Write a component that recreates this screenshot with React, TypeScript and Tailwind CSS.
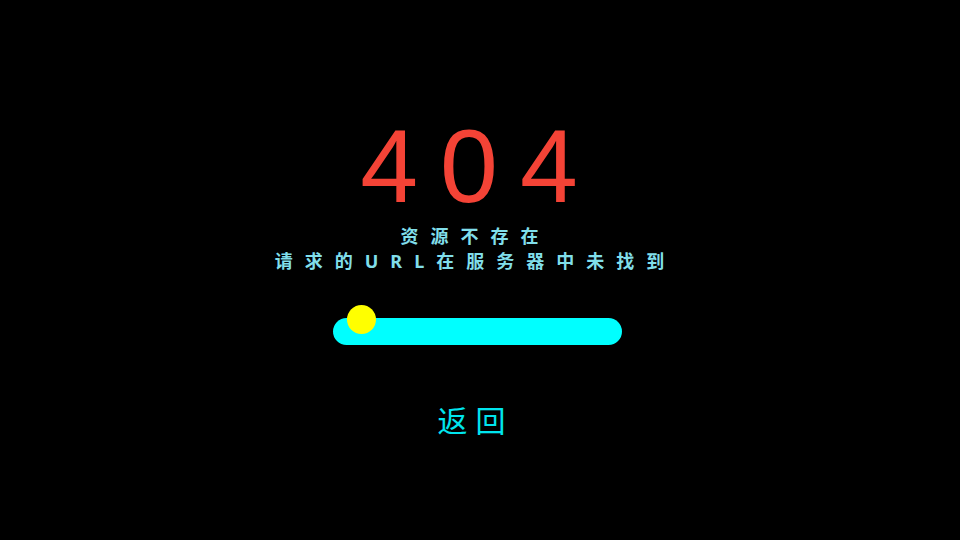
export default function App() {
  return (
    <div className="flex h-screen w-full flex-col items-center bg-black pt-[114px] font-['Liberation_Sans','Noto_Sans_CJK_SC',sans-serif]">
      <h1 className="text-[104px] leading-[104px] tracking-[22px] text-[#f44336]">404</h1>
      <div className="mt-[6px] mr-[9px] flex flex-col items-center font-['Noto_Sans','Noto_Sans_CJK_SC',sans-serif] text-[18px] leading-[25px] font-bold tracking-[12px] text-[#80deea]">
        <p>资源不存在</p>
        <p>请求的URL在服务器中未找到</p>
      </div>
      <div className="relative mt-[44px] mr-[5px] h-[27px] w-[289px] rounded-full bg-[#00ffff]">
        <div className="absolute left-[14px] top-[-13px] h-[29px] w-[29px] rounded-full bg-[#ffff00]" />
      </div>
      <button className="mt-[56px] mr-[9px] font-['Noto_Sans_CJK_SC',sans-serif] text-[30px] leading-[36px] tracking-[8px] text-[#00e5ee]">
        返回
      </button>
    </div>
  );
}
